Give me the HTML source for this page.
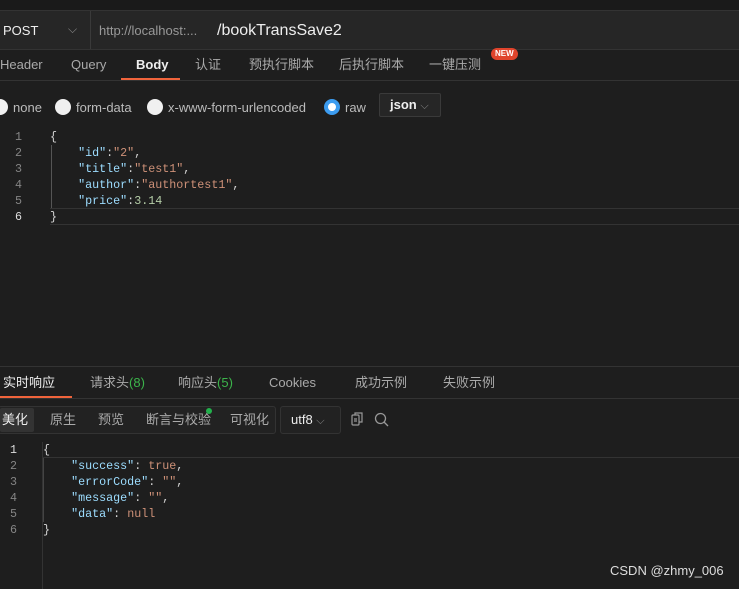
<!DOCTYPE html>
<html><head><meta charset="utf-8"><style>
*{margin:0;padding:0;box-sizing:border-box}
body{width:739px;height:589px;background:#1e1e1e;color:#ccc;font-family:"Liberation Sans","Noto Sans CJK SC",sans-serif;font-size:13px;position:relative;overflow:hidden}
.a{position:absolute;white-space:nowrap;line-height:16px}
.mono{font-family:"Liberation Mono","DejaVu Sans Mono",monospace;font-size:11.7px}
.k{color:#9cdcfe}.s{color:#ce9178}.n{color:#b5cea8}.p{color:#d4d4d4}
.ln{color:#858585;width:24px;text-align:right}
.radio{position:absolute;width:16px;height:16px;border-radius:50%;background:#f0f0f0;top:99px}
</style></head><body>
<div class="a" style="left:0;top:0;width:739px;height:10px;background:#1a1a1a"></div>
<div class="a" style="left:0;top:10px;width:739px;height:40px;background:#262626;border-top:1px solid #333;border-bottom:1px solid #333"></div>
<div class="a" style="left:90px;top:11px;width:1px;height:38px;background:#3a3a3a"></div>
<div class="a" style="left:3px;top:23px;color:#eee;font-size:13px">POST</div>
<div class="a" style="left:68px;top:21px;color:#888;font-size:12px">⌵</div>
<div class="a" style="left:99px;top:23px;color:#999;font-size:13px">http://localhost:...</div>
<div class="a" style="left:217px;top:21px;color:#eee;font-size:16px;line-height:20px">/bookTransSave2</div>
<div class="a" style="left:0;top:80px;width:739px;height:1px;background:#333"></div>
<div class="a" style="left:0;top:57px;color:#aaa">Header</div>
<div class="a" style="left:71px;top:57px;color:#aaa">Query</div>
<div class="a" style="left:136px;top:57px;color:#eee;font-weight:bold">Body</div>
<div class="a" style="left:121px;top:78px;width:59px;height:2px;background:#f0643c"></div>
<div class="a" style="left:195px;top:57px;color:#aaa">认证</div>
<div class="a" style="left:249px;top:57px;color:#aaa">预执行脚本</div>
<div class="a" style="left:339px;top:57px;color:#aaa">后执行脚本</div>
<div class="a" style="left:429px;top:57px;color:#aaa">一键压测</div>
<div class="a" style="left:491px;top:48px;background:#e0442c;color:#fff;font-size:8px;line-height:10px;padding:1px 4px;border-radius:6px;font-weight:bold">NEW</div>
<div class="radio" style="left:-8px"></div>
<div class="a" style="left:13px;top:100px;color:#bbb">none</div>
<div class="radio" style="left:55px"></div>
<div class="a" style="left:76px;top:100px;color:#bbb">form-data</div>
<div class="radio" style="left:147px"></div>
<div class="a" style="left:168px;top:100px;color:#bbb">x-www-form-urlencoded</div>
<div class="radio" style="left:324px;background:#fff;border:4px solid #3c9cf0"></div>
<div class="a" style="left:345px;top:100px;color:#bbb">raw</div>
<div class="a" style="left:379px;top:93px;width:62px;height:24px;border:1px solid #3a3a3a;background:#262626;border-radius:2px"></div>
<div class="a" style="left:390px;top:97px;color:#eee;font-weight:bold">json <span style="color:#888;font-weight:normal;font-size:11px">⌵</span></div>
<div class="a" style="left:50px;top:208px;width:689px;height:17px;border:1px solid #333;border-left:none;border-right:none"></div>
<div class="a" style="left:51px;top:145px;width:1px;height:63px;background:#555"></div>
<div class="a mono" style="left:-2px;top:129px;line-height:16px">
<div class="ln">1</div><div class="ln">2</div><div class="ln">3</div><div class="ln">4</div><div class="ln">5</div><div class="ln" style="color:#ddd">6</div></div>
<div class="a mono" style="left:50px;top:129px;line-height:16px">
<div class="p">{</div>
<div>&nbsp;&nbsp;&nbsp;&nbsp;<span class="k">"id"</span><span class="p">:</span><span class="s">"2"</span><span class="p">,</span></div>
<div>&nbsp;&nbsp;&nbsp;&nbsp;<span class="k">"title"</span><span class="p">:</span><span class="s">"test1"</span><span class="p">,</span></div>
<div>&nbsp;&nbsp;&nbsp;&nbsp;<span class="k">"author"</span><span class="p">:</span><span class="s">"authortest1"</span><span class="p">,</span></div>
<div>&nbsp;&nbsp;&nbsp;&nbsp;<span class="k">"price"</span><span class="p">:</span><span class="n">3.14</span></div>
<div class="p">}</div></div>
<div class="a" style="left:0;top:366px;width:739px;height:1px;background:#333"></div>
<div class="a" style="left:0;top:398px;width:739px;height:1px;background:#333"></div>
<div class="a" style="left:3px;top:375px;color:#eee">实时响应</div>
<div class="a" style="left:0;top:396px;width:72px;height:2px;background:#f0643c"></div>
<div class="a" style="left:90px;top:375px;color:#aaa">请求头<span style="color:#3cb44b">(8)</span></div>
<div class="a" style="left:178px;top:375px;color:#aaa">响应头<span style="color:#3cb44b">(5)</span></div>
<div class="a" style="left:269px;top:375px;color:#aaa">Cookies</div>
<div class="a" style="left:355px;top:375px;color:#aaa">成功示例</div>
<div class="a" style="left:443px;top:375px;color:#aaa">失败示例</div>
<div class="a" style="left:-2px;top:406px;width:278px;height:28px;border:1px solid #333;border-radius:3px;background:#222"></div>
<div class="a" style="left:0;top:408px;width:34px;height:24px;background:#333;border-radius:2px"></div>
<div class="a" style="left:2px;top:412px;color:#eee">美化</div>
<div class="a" style="left:50px;top:412px;color:#aaa">原生</div>
<div class="a" style="left:98px;top:412px;color:#aaa">预览</div>
<div class="a" style="left:146px;top:412px;color:#aaa">断言与校验</div>
<div class="a" style="left:206px;top:408px;width:6px;height:6px;border-radius:50%;background:#22b14c"></div>
<div class="a" style="left:230px;top:412px;color:#aaa">可视化</div>
<div class="a" style="left:280px;top:406px;width:61px;height:28px;border:1px solid #333;border-radius:3px;background:#222"></div>
<div class="a" style="left:291px;top:412px;color:#eee">utf8 <span style="color:#888;font-size:11px">⌵</span></div>
<svg class="a" style="left:350px;top:412px" width="14" height="14" viewBox="0 0 14 14" fill="none" stroke="#999" stroke-width="1.2"><rect x="2" y="3" width="7" height="10" rx="1"/><path d="M5 3V1h7v9h-3"/><path d="M4 7h3M4 9h3"/></svg>
<svg class="a" style="left:374px;top:412px" width="15" height="15" viewBox="0 0 15 15" fill="none" stroke="#999" stroke-width="1.3"><circle cx="6.5" cy="6.5" r="5"/><path d="M10 10l4 4"/></svg>
<div class="a" style="left:42px;top:442px;width:1px;height:147px;background:#333"></div>
<div class="a" style="left:43px;top:457px;width:696px;height:1px;background:#333"></div>
<div class="a" style="left:43px;top:458px;width:1px;height:64px;background:#444"></div>
<div class="a mono" style="left:-7px;top:442px;line-height:16px">
<div class="ln" style="color:#ddd">1</div><div class="ln">2</div><div class="ln">3</div><div class="ln">4</div><div class="ln">5</div><div class="ln">6</div></div>
<div class="a mono" style="left:43px;top:442px;line-height:16px">
<div class="p">{</div>
<div>&nbsp;&nbsp;&nbsp;&nbsp;<span class="k">"success"</span><span class="p">: </span><span class="s">true</span><span class="p">,</span></div>
<div>&nbsp;&nbsp;&nbsp;&nbsp;<span class="k">"errorCode"</span><span class="p">: </span><span class="s">""</span><span class="p">,</span></div>
<div>&nbsp;&nbsp;&nbsp;&nbsp;<span class="k">"message"</span><span class="p">: </span><span class="s">""</span><span class="p">,</span></div>
<div>&nbsp;&nbsp;&nbsp;&nbsp;<span class="k">"data"</span><span class="p">: </span><span class="s">null</span></div>
<div class="p">}</div></div>
<div class="a" style="left:610px;top:563px;color:#ddd;font-size:13px">CSDN @zhmy_006</div>
</body></html>
